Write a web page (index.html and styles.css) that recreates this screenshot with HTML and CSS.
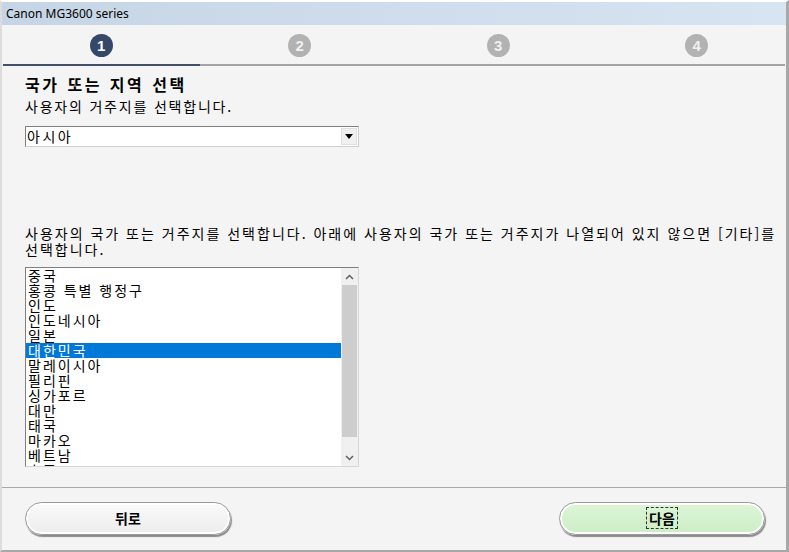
FILE: index.html
```html
<!DOCTYPE html>
<html lang="ko">
<head>
  <meta charset="UTF-8" />
  <title>Canon MG3600 series</title>
  <link rel="stylesheet" href="styles.css">
</head>
<body>
  <div class="window">
    <div class="titlebar">Canon MG3600 series</div>

    <div class="steps">
      <div class="step"><span class="dot active">1</span></div>
      <div class="step"><span class="dot">2</span></div>
      <div class="step"><span class="dot">3</span></div>
      <div class="step"><span class="dot">4</span></div>
    </div>
    <div class="progress"><div class="done"></div></div>

    <div class="content">
      <h1>국가 또는 지역 선택</h1>
      <p class="lead">사용자의 거주지를 선택합니다.</p>

      <div class="select">
        <span class="value">아시아</span>
        <span class="drop"><svg width="8" height="5" viewBox="0 0 8 5"><path d="M0 0h8L4 5z" fill="#000"/></svg></span>
      </div>

      <p class="note">사용자의 국가 또는 거주지를 선택합니다. 아래에 사용자의 국가 또는 거주지가 나열되어 있지 않으면 [기타]를<br>선택합니다.</p>

      <div class="listbox">
        <ul id="countries"></ul>
        <div class="scrollbar">
          <div class="arrow"><svg width="9" height="6" viewBox="0 0 9 6"><path d="M1 5l3.5-3.5L8 5" fill="none" stroke="#606060" stroke-width="1.5"/></svg></div>
          <div class="thumb"></div>
          <div class="track"></div>
          <div class="arrow"><svg width="9" height="6" viewBox="0 0 9 6"><path d="M1 1l3.5 3.5L8 1" fill="none" stroke="#606060" stroke-width="1.5"/></svg></div>
        </div>
      </div>
    </div>

    <div class="footer">
      <button class="btn">뒤로</button>
      <button class="btn next"><span class="focus">다음</span></button>
    </div>
  </div>

  <script>
    const countries = ["중국", "홍콩 특별 행정구", "인도", "인도네시아", "일본", "대한민국",
      "말레이시아", "필리핀", "싱가포르", "대만", "태국", "마카오", "베트남", "호주"];
    const selected = "대한민국";

    const ul = document.getElementById("countries");
    countries.forEach(c => {
      const li = document.createElement("li");
      li.textContent = c;
      if (c === selected) li.classList.add("selected");
      ul.appendChild(li);
    });
  </script>
</body>
</html>
```

FILE: styles.css
```css
* {
  box-sizing: border-box;
}
body {
  margin: 0;
  background: #fff;
  font-family: "Noto Sans CJK KR", "Noto Sans", sans-serif;
  color: #000;
}
.window {
  width: 789px;
  height: 552px;
  border-left: 2px solid #dcdcdc;
  border-right: 3px solid #a8a8a8;
  border-bottom: 2px solid #a8a8a8;
  border-top: 2px solid #fff;
  background: #f4f4f4;
  display: flex;
  flex-direction: column;
}
.titlebar {
  height: 23px;
  padding-left: 4px;
  font-family: "Noto Sans", sans-serif;
  font-size: 12px;
  line-height: 23px;
  background: linear-gradient(to right, #c6d5e5, #d7e4f2);
}
.steps {
  display: grid;
  grid-template-columns: repeat(4, 198.5px);
  height: 39px;
  align-items: center;
}
.step {
  text-align: center;
}
.dot {
  display: inline-block;
  width: 23px;
  height: 23px;
  border-radius: 50%;
  background: #b2b2b2;
  color: #f0f0f0;
  font-family: "Liberation Sans", sans-serif;
  font-weight: bold;
  font-size: 15px;
  line-height: 23px;
  text-align: center;
}
.dot.active {
  background: #35486a;
  color: #fff;
}
.progress {
  height: 2px;
  margin: 0 1px 0 1px;
  background: #a4a4a4;
}
.progress .done {
  width: 197px;
  height: 2px;
  background: #444f68;
}
.content {
  flex: 1;
  padding: 8px 0 0 23px;
  border-bottom: 1px solid #a8a8a8;
}
h1 {
  margin: 0;
  font-size: 16px;
  font-weight: bold;
  letter-spacing: 2.5px;
  word-spacing: 1px;
  line-height: 20px;
}
.lead {
  margin: 2px 0 0 0;
  font-size: 14px;
  line-height: 20px;
  letter-spacing: 1.8px;
}
.select {
  display: flex;
  width: 334px;
  height: 21px;
  margin-top: 10px;
  background: #fff;
  border: 1px solid #7f7f7f;
  border-right-color: #cfcfcf;
  border-bottom-color: #cfcfcf;
}
.select .value {
  flex: 1;
  font-size: 14px;
  line-height: 19px;
  padding-left: 1px;
  letter-spacing: 2.5px;
}
.select .drop {
  width: 16px;
  margin: 1px;
  background: #f0f0f0;
  border: 1px solid #e0e0e0;
  display: flex;
  align-items: center;
  justify-content: center;
}
.note {
  margin: 78px 0 0 0;
  font-size: 14px;
  line-height: 16px;
  letter-spacing: 2px;
  white-space: nowrap;
}
.listbox {
  display: flex;
  width: 334px;
  height: 200px;
  margin-top: 10px;
  background: #fff;
  border: 1px solid #7f7f7f;
  border-right-color: #d6d6d6;
  border-bottom-color: #d6d6d6;
  overflow: hidden;
}
.listbox ul {
  flex: 1;
  list-style: none;
  margin: 0;
  padding: 0;
  overflow: hidden;
}
.listbox li {
  height: 15px;
  padding-left: 2px;
  font-size: 14px;
  line-height: 15px;
  letter-spacing: 2px;
  white-space: nowrap;
}
.listbox li.selected {
  background: #0078d7;
  color: #fff;
}
.scrollbar {
  width: 17px;
  display: flex;
  flex-direction: column;
  background: #f0f0f0;
}
.scrollbar .arrow {
  height: 17px;
  display: flex;
  align-items: center;
  justify-content: center;
}
.scrollbar .thumb {
  height: 152px;
  margin: 0 1px;
  background: #cdcdcd;
}
.scrollbar .track {
  flex: 1;
}
.footer {
  height: 62px;
  display: flex;
  justify-content: space-between;
  align-items: center;
  padding: 0 21px 2px 23px;
}
.btn {
  width: 206px;
  height: 33px;
  border-radius: 17px;
  border: 1px solid #9a9a9a;
  background: linear-gradient(#fafafa, #ececec);
  box-shadow: inset 0 0 0 2px #fff, 1px 2px 1px #8a8a8a;
  font-family: "Noto Sans CJK KR", sans-serif;
  font-weight: bold;
  font-size: 14px;
  color: #000;
}
.btn.next {
  background: linear-gradient(#dcf5d6, #cdeec6);
}
.focus {
  padding: 0 2px;
  border: 1px dashed #333;
}
```
